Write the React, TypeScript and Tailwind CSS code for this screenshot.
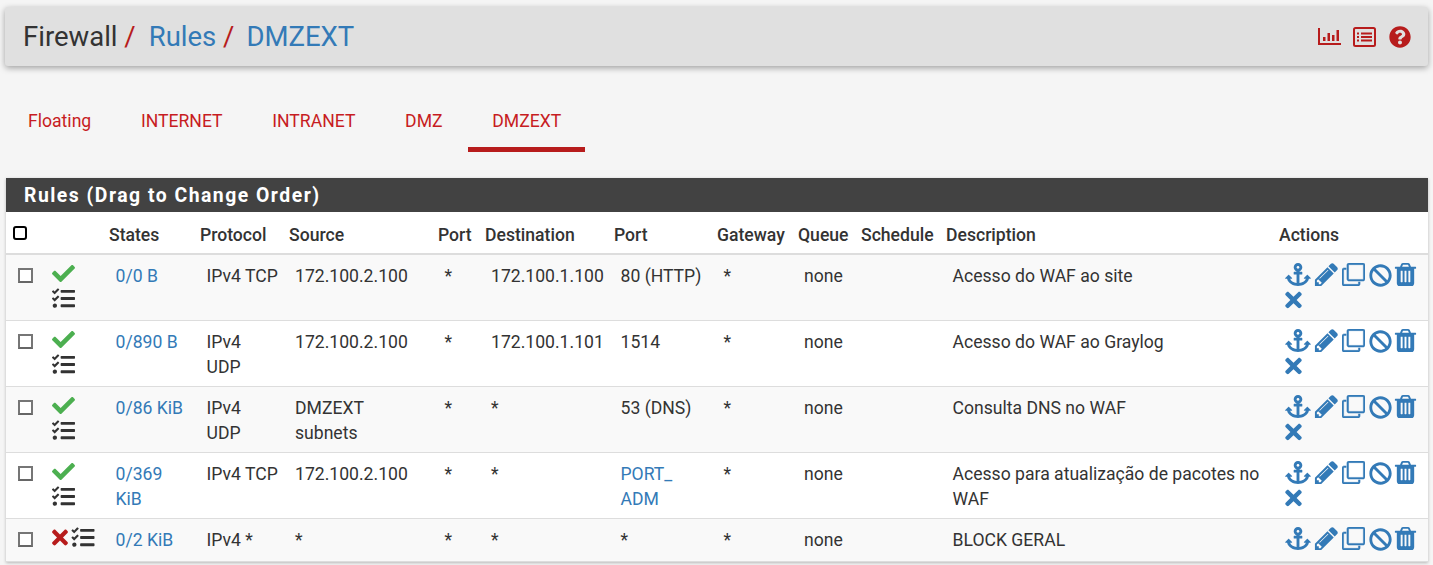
import React from "react";
import { FaAnchor, FaBan, FaCheck, FaTasks, FaTimes, FaQuestionCircle } from "react-icons/fa";

type Rule = {
  ok: boolean;
  states: string;
  protocol: React.ReactNode;
  source: React.ReactNode;
  destination: string;
  port: React.ReactNode;
  description: string;
};

const rules: Rule[] = [
  { ok: true, states: "0/0 B", protocol: "IPv4 TCP", source: "172.100.2.100", destination: "172.100.1.100", port: "80 (HTTP)", description: "Acesso do WAF ao site" },
  { ok: true, states: "0/890 B", protocol: <>IPv4<br />UDP</>, source: "172.100.2.100", destination: "172.100.1.101", port: "1514", description: "Acesso do WAF ao Graylog" },
  { ok: true, states: "0/86 KiB", protocol: <>IPv4<br />UDP</>, source: <>DMZEXT<br />subnets</>, destination: "*", port: "53 (DNS)", description: "Consulta DNS no WAF" },
  { ok: true, states: "0/369 KiB", protocol: "IPv4 TCP", source: "172.100.2.100", destination: "*", port: <span className="text-[#337ab7]">PORT_<br />ADM</span>, description: "Acesso para atualização de pacotes no WAF" },
  { ok: false, states: "0/2 KiB", protocol: "IPv4 *", source: "*", destination: "*", port: "*", description: "BLOCK GERAL" },
];

const headers = ["States", "Protocol", "Source", "Port", "Destination", "Port", "Gateway", "Queue", "Schedule", "Description", "Actions"];
const tabs = ["Floating", "INTERNET", "INTRANET", "DMZ", "DMZEXT"];

const Fa4 = ({ d, className, bold }: { d: string; className: string; bold?: boolean }) => (
  <svg viewBox="0 0 1792 1792" fill="currentColor" stroke={bold ? "currentColor" : "none"} strokeWidth={bold ? 36 : 0} className={className}>
    <path d={d} />
  </svg>
);

const pencil = "M491 1536l91-91-235-235-91 91v107h128v128h107zm523-928q0-22-22-22-10 0-17 7l-542 542q-7 7-7 17 0 22 22 22 10 0 17-7l542-542q7-7 7-17zm-54-192l416 416-832 832h-416v-416zm683 96q0 53-37 90l-166 166-416-416 166-165q36-38 90-38 53 0 91 38l235 234q37 39 37 91z";
const clone = "M1664 1632v-1088q0-13-9.5-22.5t-22.5-9.5h-1088q-13 0-22.5 9.5t-9.5 22.5v1088q0 13 9.5 22.5t22.5 9.5h1088q13 0 22.5-9.5t9.5-22.5zm128-1088v1088q0 66-47 113t-113 47h-1088q-66 0-113-47t-47-113v-1088q0-66 47-113t113-47h1088q66 0 113 47t47 113zm-384-384v160h-128v-160q0-13-9.5-22.5t-22.5-9.5h-1088q-13 0-22.5 9.5t-9.5 22.5v1088q0 13 9.5 22.5t22.5 9.5h160v128h-160q-66 0-113-47t-47-113v-1088q0-66 47-113t113-47h1088q66 0 113 47t47 113z";
const trash = "M704 1376v-704q0-14-9-23t-23-9h-64q-14 0-23 9t-9 23v704q0 14 9 23t23 9h64q14 0 23-9t9-23zm256 0v-704q0-14-9-23t-23-9h-64q-14 0-23 9t-9 23v704q0 14 9 23t23 9h64q14 0 23-9t9-23zm256 0v-704q0-14-9-23t-23-9h-64q-14 0-23 9t-9 23v704q0 14 9 23t23 9h64q14 0 23-9t9-23zm-544-992h448l-48-117q-7-9-17-11h-317q-10 2-17 11zm928 32v64q0 14-9 23t-23 9h-96v948q0 83-47 143.5t-113 60.5h-832q-66 0-113-58.5t-47-141.5v-952h-96q-14 0-23-9t-9-23v-64q0-14 9-23t23-9h309l70-167q15-37 54-63t79-26h320q40 0 79 26t54 63l70 167h309q14 0 23 9t9 23z";

const App = () => {
  return (
    <div className="h-[565px] overflow-hidden bg-[#f5f5f5] px-[5px] pt-[7px] font-['Roboto',sans-serif] text-[17.6px] leading-[25px] text-[#333]">
      <div className="flex h-[59px] items-center justify-between rounded-[3px] bg-[#e0e0e0] pl-[18px] pr-[17px] shadow-[0_2px_6px_rgba(0,0,0,0.35)]">
        <div className="text-[27.5px] leading-[34px] whitespace-nowrap">
          Firewall<span className="text-[#b71c1c]"> /</span>
          <span className="ml-[13px] text-[#337ab7]">Rules</span><span className="text-[#b71c1c]"> /</span>
          <span className="ml-[12px] text-[#337ab7]">DMZEXT</span>
        </div>
        <div className="flex items-center text-[#b71c1c]">
          <svg viewBox="0 0 23 17" className="-mt-[1px] h-[17px] w-[23px]" fill="currentColor">
            <path d="M0 0h2v15H23v2H0z" />
            <path d="M5 9h2.5v4H5zM9.5 5h2.5v8H9.5zM14 7h2.5v6H14zM18.5 2h2.5v11h-2.5z" />
          </svg>
          <svg viewBox="0 0 23 20" className="ml-[12px] h-[20px] w-[23px]" fill="none" stroke="currentColor" strokeWidth="2">
            <rect x="1" y="1" width="21" height="18" rx="1.5" />
            <path d="M8 6.5h11M8 10h11M8 13.5h11" />
            <path d="M4 6.5h2M4 10h2M4 13.5h2" />
          </svg>
          <FaQuestionCircle className="ml-[13px] h-[22px] w-[22px]" />
        </div>
      </div>

      <div className="mt-[28px] -ml-[1px] flex h-[58px] gap-[1.7px] text-[#c71c22]">
        {tabs.map((t) => (
          <div key={t} className={`flex items-center border-b-[5px] px-[24px] pt-[2px] ${t === "DMZEXT" ? "border-[#b71c1c]" : "border-transparent"}`}>
            {t}
          </div>
        ))}
      </div>

      <div className="mt-[26px] ml-[1px] bg-white shadow-[0_1px_3px_rgba(0,0,0,0.25)]">
        <div className="flex h-[34px] items-center bg-[#424242] pl-[18px] text-[19.36px] font-bold tracking-[1.5px] text-white">
          Rules (Drag to Change Order)
        </div>
        <table className="w-[1422px] table-fixed border-collapse text-left">
          <colgroup>
            <col className="w-[40px]" />
            <col className="w-[55px]" />
            <col className="w-[91px]" />
            <col className="w-[89px]" />
            <col className="w-[149px]" />
            <col className="w-[47px]" />
            <col className="w-[129px]" />
            <col className="w-[103px]" />
            <col className="w-[81px]" />
            <col className="w-[63px]" />
            <col className="w-[85px]" />
            <col className="w-[333px]" />
            <col className="w-[157px]" />
          </colgroup>
          <thead>
            <tr className="h-[42px] border-b-[2px] border-[#ddd]">
              <th className="pl-[7px] align-middle">
                <div className="h-[14px] w-[14px] rounded-[3px] border-[2px] border-black bg-white" />
              </th>
              <th />
              {headers.map((h, i) => (
                <th key={i} className="pl-[8px] pt-[6px] font-medium whitespace-nowrap">{h}</th>
              ))}
            </tr>
          </thead>
          <tbody>
            {rules.map((r, i) => (
              <tr key={i} className={`border-b border-[#ddd] align-top ${i % 2 === 0 ? "bg-[#f9f9f9]" : "bg-white"} ${r.ok ? "h-[66px]" : "h-[43px]"}`}>
                <td className="pl-[11.5px] pt-[13px]">
                  <div className="h-[15px] w-[15px] border-[2px] border-[#767676] border-b-[#666] bg-white" />
                </td>
                <td className="pl-[6px] pt-[7px]">
                  {r.ok ? (
                    <div className="flex flex-col">
                      <FaCheck className="h-[23px] w-[23px] text-[#4caf50]" />
                      <FaTasks className="mt-[2px] h-[23px] w-[23px] text-[#333]" />
                    </div>
                  ) : (
                    <div className="-ml-[1px] flex gap-x-[2px]">
                      <FaTimes className="h-[23px] w-[18px] text-[#b71c1c]" />
                      <FaTasks className="h-[23px] w-[24px] text-[#333]" />
                    </div>
                  )}
                </td>
                <td className="pl-[14.5px] pr-[7px] pt-[9px] text-[#337ab7]">{r.states}</td>
                <td className="pl-[14.5px] pt-[9px] whitespace-nowrap">{r.protocol}</td>
                <td className="pl-[14px] pt-[9px]">{r.source}</td>
                <td className="pl-[14.5px] pt-[9px]">*</td>
                <td className="pl-[14px] pt-[9px]">{r.destination}</td>
                <td className="pl-[14.5px] pt-[9px] whitespace-nowrap">{r.port}</td>
                <td className="pl-[14.5px] pt-[9px]">*</td>
                <td className="pl-[14px] pt-[9px]">none</td>
                <td />
                <td className="pl-[14.5px] pr-[7px] pt-[9px]">{r.description}</td>
                <td className="pl-[14px] pt-[8px] text-[#337ab7]">
                  <div className="flex h-[23px] items-start">
                    <FaAnchor className="h-[23px] w-[26px]" />
                    <Fa4 d={pencil} className="-mt-[2px] ml-[2px] h-[27px] w-[27px] shrink-0" />
                    <Fa4 d={clone} bold className="ml-[2px] h-[23px] w-[23px] shrink-0 -scale-y-100" />
                    <FaBan className="ml-[4px] mt-[1px] h-[23px] w-[23px] shrink-0" />
                    <Fa4 d={trash} className="-mt-[2px] h-[27px] w-[27px] shrink-0" />
                  </div>
                  {r.ok && <FaTimes className="mt-[2px] h-[24px] w-[17px]" />}
                </td>
              </tr>
            ))}
          </tbody>
        </table>
      </div>
    </div>
  );
};

export default App;
